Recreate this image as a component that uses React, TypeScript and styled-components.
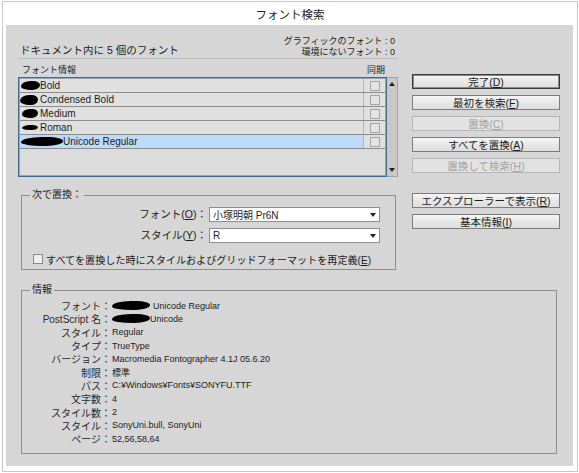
import React from "react";
import styled, { createGlobalStyle } from "styled-components";

const FONT = `"Liberation Sans", "Noto Sans CJK JP", sans-serif`;

const GlobalStyle = createGlobalStyle`
  html, body { margin: 0; background: #ffffff; }
  body { padding: 1px 1px 0 2px; font-family: ${FONT}; color: #1c1c1c; }
  * { box-sizing: border-box; }
`;

const Window = styled.div`
  width: 576px;
  height: 471px;
  border: 1px solid #c6c6c6;
  background: #ffffff;
  display: flex;
  flex-direction: column;
`;

const TitleBar = styled.div`
  height: 23px;
  display: flex;
  align-items: center;
  justify-content: center;
  font-size: 11.5px;
  color: #222;
`;

const Panel = styled.div`
  margin: 0 4px 0 3px;
  height: 441px;
  background: #d6d6d6;
  padding: 12px 13px 0 12px;
  display: flex;
  flex-direction: column;
`;

const TopGrid = styled.div`
  display: grid;
  grid-template-columns: 380px 148px;
  column-gap: 14px;
`;

const LeftCol = styled.div`
  display: flex;
  flex-direction: column;
`;

const HeaderRow = styled.div`
  height: 22px;
  border-bottom: 1px solid #bcbcbc;
  display: flex;
  justify-content: space-between;
  align-items: flex-end;
  padding: 0 3px 0 2px;
`;

const Heading = styled.div`
  font-size: 10.5px;
  line-height: 14px;
  padding-bottom: 1px;
`;

const Counts = styled.div`
  font-size: 9px;
  line-height: 11px;
  text-align: right;
`;

const ListLabels = styled.div`
  height: 18px;
  display: grid;
  grid-template-columns: 1fr 22px 11px;
  align-items: center;
  padding: 2px 0 0 4px;
  font-size: 9px;
`;

const SyncLabel = styled.span`
  text-align: center;
`;

const ListFrame = styled.div`
  height: 100px;
  display: flex;
`;

const ListBody = styled.div`
  flex: 1;
  border: 1px solid #46698e;
  background: #8ea7c0;
  padding: 1px;
`;

const ListInner = styled.div`
  height: 100%;
  background: #dcdcdc;
`;

const Row = styled.div`
  display: grid;
  grid-template-columns: 1fr 22px;
  height: 14px;
  border-bottom: 1px solid #8c8c8c;
`;

const NameCell = styled.div<{ $sel?: boolean }>`
  display: flex;
  align-items: center;
  font-size: 10px;
  background: ${(p) => (p.$sel ? "#bddafa" : "#e0e0e0")};
`;

const SyncCell = styled.div`
  border-left: 1px solid #b4b4b4;
  background: #e0e0e0;
  display: flex;
  align-items: center;
  justify-content: center;
`;

const SmallCheck = styled.span`
  width: 10px;
  height: 10px;
  border: 1px solid #a4a4a4;
  background: #e4e4e4;
`;

const Blob = styled.span<{ $w: number; $h?: number; $ml?: number; $mr?: number }>`
  display: inline-block;
  width: ${(p) => p.$w}px;
  height: ${(p) => p.$h ?? 9}px;
  margin-left: ${(p) => p.$ml ?? 0}px;
  margin-right: ${(p) => p.$mr ?? 1}px;
  background: #000;
  border-radius: 50% 35% 40% 55% / 60% 45% 55% 40%;
  flex: none;
`;

const Scrollbar = styled.div`
  width: 11px;
  background: #c8c8c8;
  border: 1px solid #a2a2a2;
  border-left: none;
  display: flex;
  flex-direction: column;
  justify-content: space-between;
  align-items: center;
  padding: 4px 0 4px;
`;

const Arrow = styled.span<{ $down?: boolean }>`
  width: 0;
  height: 0;
  border-left: 3px solid transparent;
  border-right: 3px solid transparent;
  ${(p) =>
    p.$down ? "border-top: 4px solid #222;" : "border-bottom: 4px solid #222;"}
`;

const Group = styled.fieldset<{ $mt: number; $mr: number }>`
  margin: ${(p) => p.$mt}px ${(p) => p.$mr}px 0 3px;
  padding: 0;
  border: 1px solid #8e8e8e;
  min-width: 0;
`;

const Legend = styled.legend`
  margin-left: 8px;
  padding: 0 2px;
  font-size: 10px;
  line-height: 12px;
`;

const ReplaceGrid = styled.div`
  display: grid;
  grid-template-columns: 1fr 171px;
  column-gap: 2px;
  row-gap: 6px;
  padding: 6px 15px 0 0;
  align-items: center;
`;

const FieldLabel = styled.span`
  text-align: right;
  font-size: 10.5px;
  line-height: 15px;
`;

const Select = styled.div`
  height: 15px;
  background: #ffffff;
  border: 1px solid #8e8e8e;
  display: flex;
  align-items: center;
  justify-content: space-between;
  padding: 0 3px 0 3px;
  font-size: 10px;
`;

const CheckRow = styled.label`
  margin-top: 9px;
  height: 14px;
  padding-left: 11px;
  margin-bottom: 3px;
  display: flex;
  align-items: center;
  gap: 3px;
  font-size: 10.1px;
  white-space: nowrap;
`;

const Check = styled.span`
  width: 10px;
  height: 10px;
  border: 1px solid #8a8a8a;
  background: #efefef;
  flex: none;
`;

const Mn = styled.span`
  text-decoration: underline;
`;

const ButtonCol = styled.div`
  display: flex;
  flex-direction: column;
  gap: 6px;
  padding-top: 37px;
`;

const Btn = styled.div<{ $primary?: boolean; $disabled?: boolean; $mt?: number }>`
  height: 15px;
  margin-top: ${(p) => p.$mt ?? 0}px;
  display: flex;
  align-items: center;
  justify-content: center;
  font-size: 10.5px;
  color: ${(p) => (p.$disabled ? "#a2a2a2" : "#1c1c1c")};
  background: ${(p) =>
    p.$disabled
      ? "#e2e2e2"
      : "linear-gradient(#f6f6f6, #e6e6e6 55%, #dedede)"};
  border: 1px solid
    ${(p) => (p.$primary ? "#3a3a3a" : p.$disabled ? "#b6b6b6" : "#7c7c7c")};
  box-shadow: ${(p) => (p.$primary ? "inset 0 0 0 1px #8a8a8a" : "none")};
`;

const InfoGrid = styled.div`
  display: grid;
  grid-template-columns: 89px 1fr;
  grid-auto-rows: 13.3px;
  padding: 3px 0 8px 0;
  align-items: center;
`;

const InfoLabel = styled.span`
  text-align: right;
  font-size: 10px;
  color: #2a2a2a;
  white-space: nowrap;
`;

const InfoValue = styled.span`
  font-size: 9px;
  padding-left: 1px;
  display: flex;
  align-items: center;
  white-space: nowrap;
`;

const rows = [
  { w: 19, ml: 1, h: 9, text: "Bold" },
  { w: 18, ml: 0, h: 10, text: "Condensed Bold", gap: 2 },
  { w: 16, ml: 2, h: 9, text: "Medium", gap: 2 },
  { w: 16, ml: 2, h: 5, text: "Roman", gap: 2 },
  { w: 42, ml: 1, h: 9, text: "Unicode Regular", sel: true },
];

const info: [string, React.ReactNode][] = [
  [
    "フォント：",
    <>
      <Blob $w={38} $mr={3} />
      Unicode Regular
    </>,
  ],
  [
    "PostScript 名：",
    <>
      <Blob $w={38} $mr={0} />
      Unicode
    </>,
  ],
  ["スタイル：", "Regular"],
  ["タイプ：", "TrueType"],
  ["バージョン：", "Macromedia Fontographer 4.1J 05.6.20"],
  ["制限：", "標準"],
  ["パス：", "C:¥Windows¥Fonts¥SONYFU.TTF"],
  ["文字数：", "4"],
  ["スタイル数：", "2"],
  ["スタイル：", "SonyUni.bull, SonyUni"],
  ["ページ：", "52,56,58,64"],
];

export default function App() {
  return (
    <>
      <GlobalStyle />
      <Window>
        <TitleBar>フォント検索</TitleBar>
        <Panel>
          <TopGrid>
            <LeftCol>
              <HeaderRow>
                <Heading>ドキュメント内に 5 個のフォント</Heading>
                <Counts>
                  グラフィックのフォント : 0
                  <br />
                  環境にないフォント : 0
                </Counts>
              </HeaderRow>
              <ListLabels>
                <span>フォント情報</span>
                <SyncLabel>同期</SyncLabel>
              </ListLabels>
              <ListFrame>
                <ListBody>
                  <ListInner>
                    {rows.map((r, i) => (
                      <Row key={i}>
                        <NameCell $sel={r.sel}>
                          <Blob $w={r.w} $h={r.h} $ml={r.ml} $mr={r.gap ?? 0} />
                          {r.text}
                        </NameCell>
                        <SyncCell>
                          <SmallCheck />
                        </SyncCell>
                      </Row>
                    ))}
                  </ListInner>
                </ListBody>
                <Scrollbar>
                  <Arrow />
                  <Arrow $down />
                </Scrollbar>
              </ListFrame>
              <Group $mt={12} $mr={2}>
                <Legend>次で置換：</Legend>
                <ReplaceGrid>
                  <FieldLabel>
                    フォント(<Mn>O</Mn>)：
                  </FieldLabel>
                  <Select>
                    <span>小塚明朝 Pr6N</span>
                    <Arrow $down />
                  </Select>
                  <FieldLabel>
                    スタイル(<Mn>Y</Mn>)：
                  </FieldLabel>
                  <Select>
                    <span>R</span>
                    <Arrow $down />
                  </Select>
                </ReplaceGrid>
                <CheckRow>
                  <Check />
                  <span>
                    すべてを置換した時にスタイルおよびグリッドフォーマットを再定義(<Mn>E</Mn>)
                  </span>
                </CheckRow>
              </Group>
            </LeftCol>
            <ButtonCol>
              <Btn $primary>
                完了(<Mn>D</Mn>)
              </Btn>
              <Btn>
                最初を検索(<Mn>F</Mn>)
              </Btn>
              <Btn $disabled>
                置換(<Mn>C</Mn>)
              </Btn>
              <Btn>
                すべてを置換(<Mn>A</Mn>)
              </Btn>
              <Btn $disabled>
                置換して検索(<Mn>H</Mn>)
              </Btn>
              <Btn $mt={14}>
                エクスプローラーで表示(<Mn>R</Mn>)
              </Btn>
              <Btn>
                基本情報(<Mn>I</Mn>)
              </Btn>
            </ButtonCol>
          </TopGrid>
          <Group $mt={14} $mr={3}>
            <Legend>情報</Legend>
            <InfoGrid>
              {info.map(([k, v], i) => (
                <React.Fragment key={i}>
                  <InfoLabel>{k}</InfoLabel>
                  <InfoValue>{v}</InfoValue>
                </React.Fragment>
              ))}
            </InfoGrid>
          </Group>
        </Panel>
      </Window>
    </>
  );
}
